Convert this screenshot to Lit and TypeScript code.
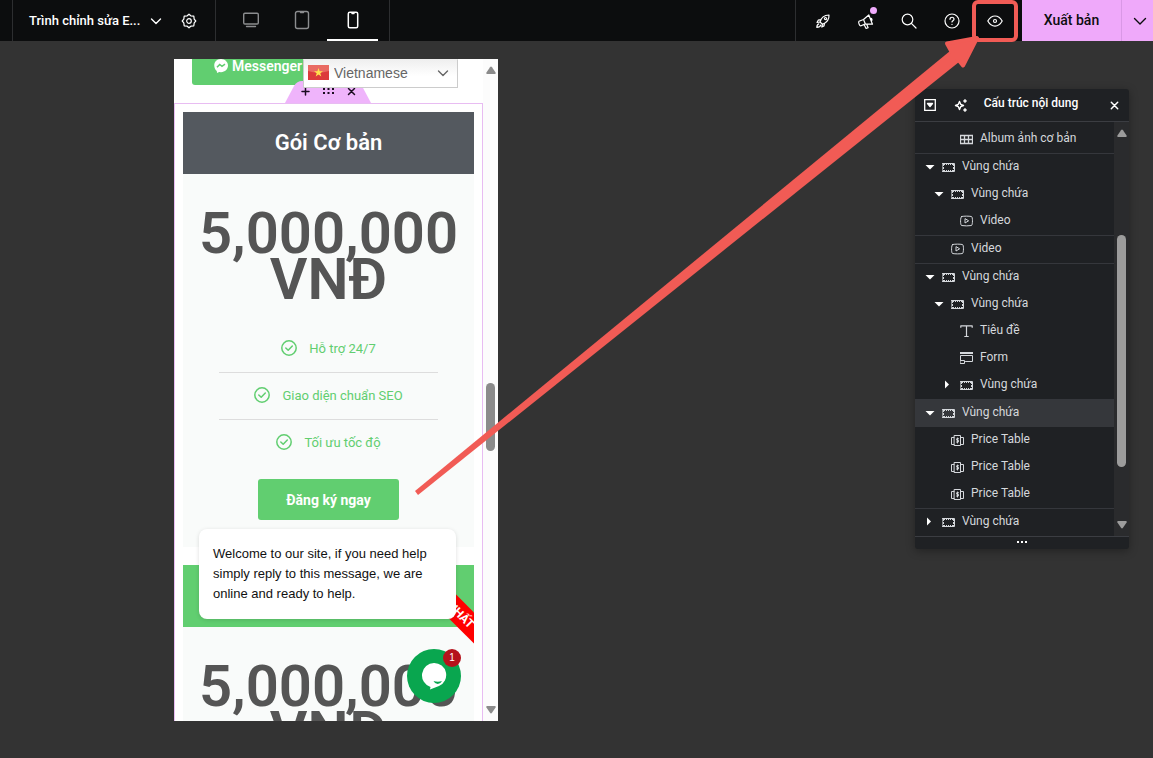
import { LitElement, html, css, svg, type TemplateResult } from "lit";
import { customElement } from "lit/decorators.js";
import { classMap } from "lit/directives/class-map.js";

type IconName = "container" | "video" | "title" | "form" | "price" | "album";

interface TreeItem {
  label: string;
  icon: IconName;
  level: number;
  toggle?: "open" | "closed";
  selected?: boolean;
}

const box: TreeItem = { label: "Vùng chứa", icon: "container", level: 0, toggle: "open" };

const groups: TreeItem[][] = [
  [{ label: "Album ảnh cơ bản", icon: "album", level: 2 }],
  [box, { ...box, level: 1 }, { label: "Video", icon: "video", level: 2 }],
  [{ label: "Video", icon: "video", level: 1 }],
  [
    box,
    { ...box, level: 1 },
    { label: "Tiêu đề", icon: "title", level: 2 },
    { label: "Form", icon: "form", level: 2 },
    { ...box, level: 2, toggle: "closed" },
  ],
  [
    { ...box, selected: true },
    { label: "Price Table", icon: "price", level: 1 },
    { label: "Price Table", icon: "price", level: 1 },
    { label: "Price Table", icon: "price", level: 1 },
  ],
  [{ ...box, toggle: "closed" }],
];

const glyph = (size: number, body: TemplateResult, width = 1.2) => html`<svg
  width=${size}
  height=${size}
  viewBox="0 0 ${size} ${size}"
  fill="none"
  stroke="currentColor"
  stroke-width=${width}
  stroke-linecap="round"
  stroke-linejoin="round"
  aria-hidden="true"
>${body}</svg>`;

const treeIcons: Record<IconName, TemplateResult> = {
  container: svg`<path d="M.5 3.500h12v8H.5z" stroke-linejoin="miter"/><path d="M2 4.500h9M2 10.500h9" stroke-dasharray="1 1" stroke-linecap="butt"/><path d="M1.500 4v7M11.500 4v7" stroke-dasharray="2 1" stroke-linecap="butt"/>`,
  video: svg`<path d="M1.500 2.500c3-.5 7-.5 10 0 1.300.3 1.300 8.200 0 9-3 .5-7 .5-10 0-1.300-.8-1.300-8.700 0-9z"/><path d="M5 5v4l3.300-2z"/>`,
  title: svg`<path d="M.8 3.800V1.800h11.400v2M6.500 1.800v11M4.300 12.500h4.400" stroke-linecap="butt" stroke-width="1.200"/>`,
  form: svg`<path d="M0 2h13" stroke-width="2" stroke-linecap="butt"/><path d="M.5 9V4.500h12v6H5.500M.5 9.500h4v3h-4z" stroke-linejoin="miter"/>`,
  price: svg`<path d="M3.500 2.500h6v10h-6zM3 4.500H.5v7H3M10 4.500h2.500v7H10" stroke-linejoin="miter"/><path d="M7.500 5.700H5.700v1.500h1.700v1.800H5.500M6.500 5v5"/>`,
  album: svg`<path d="M.5 3.500h12v8H.5zM.5 7.500h12M4.500 3.500v8M8.500 3.500v8" stroke-linejoin="miter" stroke-width="1.300"/>`,
};

const chevron = glyph(12, svg`<path d="M1.500 4 6 8.500 10.500 4"/>`, 1.4);

@customElement("scroll-rail")
class ScrollRail extends LitElement {
  static properties = { before: { type: Number }, thumb: { type: Number }, after: { type: Number } };
  declare before: number;
  declare thumb: number;
  declare after: number;

  static styles = css`
    :host { display: flex; flex-direction: column; align-items: center; width: 15px; box-sizing: border-box; padding: 7px 0; }
    .arrow { width: 10px; height: 8px; flex: none; fill: currentColor; }
    .track { flex: 1; display: flex; flex-direction: column; }
    .thumb { width: 9px; border-radius: 5px; background: currentColor; }
  `;

  render() {
    return html`
      <svg class="arrow" viewBox="0 0 10 8" aria-hidden="true"><path d="M4 1.200Q5-.2 6 1.200L9.600 6.500Q10 8 9 8H1Q0 8 .4 6.500z" /></svg>
      <div class="track">
        <div style="flex:${this.before}"></div>
        <div class="thumb" style="flex:${this.thumb}"></div>
        <div style="flex:${this.after}"></div>
      </div>
      <svg class="arrow" viewBox="0 0 10 8" aria-hidden="true"><path d="M4 6.800Q5 8.200 6 6.800L9.600 1.500Q10 0 9 0H1Q0 0 .4 1.500z" /></svg>
    `;
  }
}

@customElement("editor-bar")
class EditorBar extends LitElement {
  static styles = css`
    :host { display: flex; height: 41px; background: #0c0d0e; color: #fff; }
    button { border: 0; padding: 0; background: none; color: inherit; font: inherit; display: flex; align-items: center; justify-content: center; }
    svg { display: block; flex: none; }
    .document { margin-left: 12px; padding: 0 16px; gap: 8px; display: flex; border: solid #2d2e30; border-width: 0 1px; width: 170px; align-items: center; justify-content: space-between; }
    .name { font-size: 13px; font-weight: 500; line-height: 20px; gap: 10px; white-space: nowrap; }
    .gear { padding: 0 2px; }
    .devices { display: flex; padding: 0 11px 0 9px; border-right: 1px solid #2d2e30; }
    .device { width: 51px; color: #8c8d8f; border-bottom: 2px solid transparent; }
    .active { color: #fff; border-color: #fff; }
    .tools { margin-left: auto; display: flex; padding: 0 6px 0 5px; border-left: 1px solid #2d2e30; }
    .tool { width: 43px; position: relative; }
    .dot { position: absolute; top: 7px; right: 10px; width: 7px; height: 7px; border-radius: 50%; background: #f0abfc; }
    .marked::after { content: ""; position: absolute; inset: 0 -2px -1px -1px; border: 4px solid #f15b55; border-radius: 6px; }
    .publish, .more { background: #efa9fa; color: #0c0d0e; }
    .publish { width: 99px; font-size: 14px; font-weight: 500; padding-bottom: 2px; }
    .more { width: 32px; border-left: 1px solid #d998e6; padding-left: 4px; }
  `;

  render() {
    const gear = svg`<circle cx="8" cy="8" r="2.300"/><path d="M8 1.200 9.800 2.800 12.800 3.200 13.200 6.200 14.800 8 13.200 9.800 12.800 12.800 9.800 13.200 8 14.800 6.200 13.200 3.200 12.800 2.800 9.800 1.200 8 2.800 6.200 3.200 3.200 6.200 2.800z"/>`;
    return html`
      <div class="document">
        <button class="name">Trình chỉnh sửa E... ${chevron}</button>
        <button class="gear" aria-label="Cài đặt">${glyph(16, gear)}</button>
      </div>
      <nav class="devices">
        <button class="device" aria-label="Desktop">${glyph(18, svg`<rect x="1.700" y="2.200" width="14.600" height="10.800" rx="1.200"/><path d="M4.500 15.500h9"/>`, 1.4)}</button>
        <button class="device" aria-label="Tablet">${glyph(20, svg`<rect x="3.500" y="1.500" width="13" height="17" rx="2"/><path d="M8.500 2.500h3"/>`, 1.4)}</button>
        <button class="device active" aria-label="Mobile">${glyph(18, svg`<rect x="4.300" y="1.300" width="9.400" height="15.400" rx="1.500"/><path d="M8 2.500h2"/>`, 1.5)}</button>
      </nav>
      <div class="tools">
        <button class="tool" aria-label="Có gì mới">
          ${glyph(16, svg`<path d="M5 9C6 5 9 2.200 14 2 14.200 6.500 11.500 9.800 7.500 11.200zM5.800 6.600 3.200 7.200 2 9.500 5 9M9.600 10.200 9 12.900 6.800 14 7.500 11.200M3.800 10.800C2.300 11.200 1.900 12.800 1.800 14.300c1.900 0 3.400-.5 3.900-2.200"/><circle cx="10.500" cy="5.600" r="1.100"/>`)}
        </button>
        <button class="tool" aria-label="Thông báo">
          ${glyph(18, svg`<path d="M2 9.300 6.500 7.500 11.800 3 15.500 12.200 8.500 11.900 4 13.800C2.500 14.200 1 9.900 2 9.300zM6.500 7.500 8.400 11.900M7.200 12.700l1.900 3.800 2-.8-1.500-3.700M13.400 6.400c1.500-.3 2.200 1.700 1 2.500"/>`)}
          <span class="dot"></span>
        </button>
        <button class="tool" aria-label="Tìm kiếm">${glyph(18, svg`<circle cx="7.500" cy="7.500" r="5.300"/><path d="m11.400 11.400 4.600 4.600"/>`)}</button>
        <button class="tool" aria-label="Trợ giúp">${glyph(16, svg`<circle cx="8" cy="8" r="7"/><path d="M6 6.300C6 3.500 10 3.700 10 6.200 10 7.700 8 7.700 8 9M8 11.300v.2"/>`)}</button>
        <button class="tool marked" aria-label="Xem trước">${glyph(16, svg`<path d="M.8 8C4.500 1.300 11.500 1.300 15.200 8 11.500 14.700 4.500 14.700.8 8z"/><circle cx="8" cy="8" r="1.500"/>`)}</button>
      </div>
      <button class="publish">Xuất bản</button>
      <button class="more" aria-label="Tùy chọn lưu">${glyph(14, svg`<path d="M1.500 4.500 7 10l5.500-5.500"/>`, 1.4)}</button>
    `;
  }
}

@customElement("site-preview")
class SitePreview extends LitElement {
  static styles = css`
    :host { display: flex; width: 324px; background: #fff; overflow: hidden; }
    button { border: 0; padding: 0; font: inherit; color: inherit; background: none; }
    .page { flex: 1; position: relative; overflow: hidden; contain: size; }
    scroll-rail { color: #8b8b8b; background: #fcfcfc; }
    .contact { height: 44px; padding: 0 28px 0 18px; }
    .messenger { width: 100%; height: 26px; display: flex; align-items: center; gap: 4px; padding: 0 22px 12px; border-radius: 0 0 3px 3px; background: #61ce70; color: #fff; font-size: 14px; font-weight: 600; }
    .language { position: absolute; top: 0; left: 129px; width: 155px; height: 29px; box-sizing: border-box; border: 1px solid #ccc; border-top-color: #eee; background: linear-gradient(#efefef, #fff 60%); display: flex; align-items: center; padding: 0 8px 2px 4px; gap: 5px; color: #666; }
    .language select { appearance: none; flex: 1; min-width: 0; border: 0; padding: 0; background: none; color: inherit; font: 14px/20px "Liberation Sans", Arial, sans-serif; }
    .handles { position: absolute; top: 22px; left: 111px; width: 86px; height: 22px; box-sizing: border-box; padding-bottom: 2px; display: flex; justify-content: center; align-items: center; gap: 12px; background: #efb4fb; clip-path: path("M0 22 9 5Q12 0 17 0H69Q74 0 77 5L86 22z"); color: #1b0b20; }
    .handles svg, .language svg { display: block; }
    .plans { border: 1px solid #e8bcf2; padding: 8px; display: flex; flex-direction: column; gap: 18px; }
    .plan { position: relative; overflow: hidden; background: #f9fbfa; text-align: center; display: flex; flex-direction: column; align-items: center; padding-bottom: 27px; }
    h2 { margin: 0; width: 100%; height: 62px; font-size: 22px; line-height: 62px; font-weight: 600; color: #fff; background: #54595f; }
    .featured h2 { background: #61ce70; }
    .price { margin: 36px 0 24px; font-size: 58px; line-height: 46px; font-weight: 600; color: #555; }
    ul { list-style: none; margin: 0 0 13px; padding: 0; width: 75%; }
    li { height: 46px; box-sizing: border-box; padding-bottom: 2px; display: flex; align-items: center; justify-content: center; gap: 12px; font-size: 13px; color: #61ce70; }
    li + li { height: 47px; border-top: 1px solid #ddd; }
    .order { padding: 0 28px; height: 41px; border-radius: 3px; background: #61ce70; color: #fff; font-size: 14px; font-weight: 700; }
    .ribbon { position: absolute; top: 41px; right: -39px; width: 100px; box-sizing: border-box; padding-right: 6px; transform: rotate(45deg); background: #f00; color: #fff; font-size: 12px; line-height: 22px; font-weight: 700; }
    .greeting { position: absolute; left: 25px; bottom: 102px; width: 257px; box-sizing: border-box; padding: 15px 14px; border-radius: 8px; background: #fff; box-shadow: 0 1px 4px #0002; color: #111; font: 13px/20px "Liberation Sans", Arial, sans-serif; }
    .chat { position: absolute; left: 233px; bottom: 18px; width: 54px; height: 54px; border-radius: 50%; background: #09a64f; display: grid; place-items: center; }
    .count { position: absolute; top: 0; right: 0; width: 18px; height: 18px; border-radius: 50%; background: #b5121b; color: #fff; font: 10px/18px "Liberation Sans", Arial, sans-serif; }
  `;

  private plan(title: string, featured = false) {
    const features = ["Hỗ trợ 24/7", "Giao diện chuẩn SEO", "Tối ưu tốc độ"];
    return html`
      <article class=${classMap({ plan: true, featured })}>
        <h2>${title}</h2>
        <div class="price">5,000,000<br />VNĐ</div>
        ${featured
          ? html`<div class="ribbon">NHẤT</div>`
          : html`<ul>
                ${features.map((f) => html`<li>${glyph(16, svg`<circle cx="8" cy="8" r="7.200"/><path d="M4.800 8 7.200 10.300 11.300 6"/>`, 1.5)}<span>${f}</span></li>`)}
              </ul>
              <button class="order">Đăng ký ngay</button>`}
      </article>
    `;
  }

  render() {
    return html`
      <div class="page">
        <div class="contact">
          <button class="messenger">
            <svg width="14" height="14" viewBox="0 0 14 14" aria-hidden="true"><path fill="#fff" d="M7 0c4 0 7 2.900 7 6.600s-3 6.600-7 6.600l-1.800-.3L3 14l-.2-2C-1.500 8.500-.5 0 7 0z" /><path d="M3 8.300 5.700 5.500 8 7.300 11 5.200" fill="none" stroke="#61ce70" stroke-width="1.500" /></svg>
            Messenger
          </button>
        </div>
        <div class="handles">
          <button aria-label="Thêm">${glyph(9, svg`<path d="M4.500 1v7M1 4.500h7"/>`, 1.5)}</button>
          <button aria-label="Sửa"><svg width="13" height="8" viewBox="0 0 13 8" fill="currentColor" aria-hidden="true"><path d="M1 1h2v2H1zM5.500 1h2v2h-2zM10 1h2v2h-2zM1 5h2v2H1zM5.500 5h2v2h-2zM10 5h2v2h-2z" /></svg></button>
          <button aria-label="Xóa">${glyph(9, svg`<path d="m1.500 1.500 6 6M7.500 1.500l-6 6"/>`, 1.5)}</button>
        </div>
        <section class="plans">
          ${this.plan("Gói Cơ bản")} ${this.plan("", true)}
        </section>
        <label class="language">
          <svg width="21" height="15" viewBox="0 0 21 15" aria-hidden="true"><path fill="#dc3b3b" d="M0 0h21v15H0z" /><path fill="#e96a62" d="M0 0h21v6Q10 9 0 6z" /><path fill="#ffe34d" d="m10.500 3 1.100 3.200H15l-2.700 2 1 3.300-2.800-2-2.800 2 1-3.300L6 6.200h3.400z" /></svg>
          <select aria-label="Ngôn ngữ"><option>Vietnamese</option></select>
          ${chevron}
        </label>
        <div class="greeting">Welcome to our site, if you need help simply reply to this message, we are online and ready to help.</div>
        <button class="chat" aria-label="Chat">
          <svg width="26" height="28" viewBox="0 0 26 28" aria-hidden="true"><path fill="#fff" d="M13 1a12 12 0 0 1 5 23L9 27.500 9.500 25A12.300 12.300 0 0 1 13 1z" /><path fill="#09a64f" d="M12.500 19q4.500 1.500 8.500 0-1.500 3-4.300 3-2.800 0-4.200-3z" /></svg>
          <span class="count">1</span>
        </button>
      </div>
      <scroll-rail .before=${309} .thumb=${68} .after=${255}></scroll-rail>
    `;
  }
}

@customElement("structure-panel")
class StructurePanel extends LitElement {
  static styles = css`
    :host { display: flex; flex-direction: column; width: 214px; border-radius: 3px; overflow: hidden; background: #1f2124; color: #d5d8dc; font-size: 12px; box-shadow: 0 2px 10px #0005; }
    button { border: 0; padding: 0; background: none; color: inherit; font: inherit; }
    svg { display: block; flex: none; }
    header { height: 32px; display: flex; align-items: center; padding: 0 10px 0 9px; border-bottom: 1px solid #3b3d42; color: #fff; }
    .sparkle { margin-left: 18px; }
    h1 { flex: 1; margin: 0; padding: 0 16px 4px 0; text-align: center; font-size: 12px; line-height: 16px; font-weight: 500; }
    .body { display: flex; height: 414px; }
    .list { flex: 1; }
    .group { margin: 0; padding: 0; list-style: none; border-top: 1px solid #35373c; }
    .group:first-child { border: 0; padding-top: 4px; }
    .row { display: flex; align-items: center; height: 27px; box-sizing: border-box; padding-bottom: 2px; }
    .selected { background: #35373b; }
    .toggle { width: 10px; height: 10px; margin: 0 7px 0 10px; flex: none; }
    .label { margin-left: 7px; line-height: 16px; padding-bottom: 2px; }
    scroll-rail { background: #2a2b2d; color: #9c9c9c; }
    footer { height: 10px; padding-bottom: 2px; border-top: 1px solid #3b3d42; display: grid; place-items: center; }
  `;

  private row(item: TreeItem) {
    const caret = item.toggle === "open" ? "M.5 3h9L5 7.500z" : "M2 .5v8L6 4.500z";
    return html`<li class=${classMap({ row: true, selected: !!item.selected })} style="padding-left:${item.level * 9}px">
      ${item.toggle
        ? html`<button class="toggle" aria-label=${item.toggle === "open" ? "Thu gọn" : "Mở rộng"}>
            <svg width="10" height="10" viewBox="0 0 10 10" fill="#fff" aria-hidden="true"><path d=${caret} /></svg>
          </button>`
        : html`<span class="toggle"></span>`}
      ${glyph(13, treeIcons[item.icon], 1)}
      <span class="label">${item.label}</span>
    </li>`;
  }

  render() {
    return html`
      <header>
        <button aria-label="Thu gọn">${glyph(12, svg`<path d="M.7.7h10.600v10.600H.7z" stroke-linejoin="miter"/><path d="M3.500 4.500h5L6 7.500z" fill="currentColor"/>`, 1.3)}</button>
        <button class="sparkle" aria-label="AI">${glyph(14, svg`<path d="M5.500 3.500 6.700 6.300 9.500 7.500 6.700 8.700 5.500 11.500 4.300 8.700 1.500 7.500 4.300 6.300z"/><path d="M11 1.800v2.400M9.800 3h2.400M11 10.800v2.400M9.800 12h2.400"/>`, 1.4)}</button>
        <h1>Cấu trúc nội dung</h1>
        <button aria-label="Đóng">${glyph(9, svg`<path d="m1.300 1.300 6.400 6.400M7.700 1.300 1.300 7.700"/>`, 1.5)}</button>
      </header>
      <div class="body">
        <div class="list">${groups.map((g) => html`<ul class="group">${g.map((i) => this.row(i))}</ul>`)}</div>
        <scroll-rail .before=${98} .thumb=${232} .after=${54}></scroll-rail>
      </div>
      <footer><svg width="10" height="2" viewBox="0 0 10 2" fill="#fff" aria-hidden="true"><path d="M0 0h2v2H0zM4 0h2v2H4zM8 0h2v2H8z" /></svg></footer>
    `;
  }
}

@customElement("app-root")
class AppRoot extends LitElement {
  static styles = css`
    :host { display: flex; flex-direction: column; min-height: 100vh; position: relative; overflow: hidden; background: #333; font-family: Roboto, "Noto Sans", sans-serif; }
    main { flex: 1; display: flex; padding: 18px 174px 37px; }
    structure-panel { position: absolute; top: 89px; right: 24px; }
    .arrow { position: absolute; top: 0; left: 0; pointer-events: none; }
  `;

  render() {
    return html`
      <editor-bar></editor-bar>
      <main><site-preview></site-preview></main>
      <structure-panel></structure-panel>
      <svg class="arrow" width="1000" height="500" viewBox="0 0 1000 500" fill="#f15b55" stroke="#f15b55" stroke-linejoin="round" aria-hidden="true">
        <path d="M415 491 950 51 959 62 418 495z" stroke="none" />
        <path d="M977 38 947 43.500 952 52.500 959 60.500 963 65.500z" stroke-width="4" />
      </svg>
    `;
  }
}
